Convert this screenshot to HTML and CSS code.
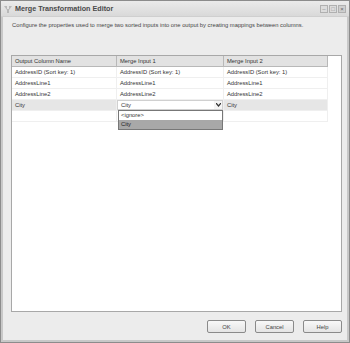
FILE: index.html
```html
<!DOCTYPE html>
<html lang="en">
<head>
    <meta charset="UTF-8">
    <title>Merge Transformation Editor</title>
    <link rel="stylesheet" href="styles.css">
</head>
<body>
    <div class="window">
        <!-- Title bar -->
        <div class="title-bar">
            <svg class="title-icon" width="8" height="8" viewBox="0 0 8 8">
                <path d="M0 1 L3 1 L3 4 L5 4 L5 1 L8 1 L5 5 L5 8 L3 8 L3 5 Z" fill="#b8b8b8"/>
            </svg>
            <span class="title-text">Merge Transformation Editor</span>
            <div class="title-buttons">
                <span class="tb-btn">&ndash;</span>
                <span class="tb-btn">&#9633;</span>
                <span class="tb-btn close">&times;</span>
            </div>
        </div>

        <div class="content">
            <p class="description">Configure the properties used to merge two sorted inputs into one output by creating mappings between columns.</p>

            <div class="grid-box">
                <div class="grid">
                    <div class="row header">
                        <div class="cell">Output Column Name</div>
                        <div class="cell">Merge Input 1</div>
                        <div class="cell">Merge Input 2</div>
                    </div>
                    <div class="row">
                        <div class="cell">AddressID (Sort key: 1)</div>
                        <div class="cell">AddressID (Sort key: 1)</div>
                        <div class="cell">AddressID (Sort key: 1)</div>
                    </div>
                    <div class="row">
                        <div class="cell">AddressLine1</div>
                        <div class="cell">AddressLine1</div>
                        <div class="cell">AddressLine1</div>
                    </div>
                    <div class="row">
                        <div class="cell">AddressLine2</div>
                        <div class="cell">AddressLine2</div>
                        <div class="cell">AddressLine2</div>
                    </div>
                    <div class="row selected">
                        <div class="cell">City</div>
                        <div class="cell combo-cell">
                            <div class="combo">
                                <span>City</span>
                                <span class="combo-arrow">
                                    <svg width="5" height="4" viewBox="0 0 5 4"><path d="M0 0 L2.5 3 L5 0" fill="none" stroke="#333" stroke-width="1.2"/></svg>
                                </span>
                            </div>
                            <div class="dropdown">
                                <div class="option">&lt;ignore&gt;</div>
                                <div class="option active">City</div>
                            </div>
                        </div>
                        <div class="cell">City</div>
                    </div>
                    <div class="row empty">
                        <div class="cell"></div>
                        <div class="cell"></div>
                        <div class="cell"></div>
                    </div>
                </div>
            </div>

            <div class="footer">
                <button class="btn">OK</button>
                <button class="btn">Cancel</button>
                <button class="btn">Help</button>
            </div>
        </div>
    </div>
</body>
</html>
```

FILE: styles.css
```css
/* Base */
html, body {
    margin: 0;
    padding: 0;
    background: #ffffff;
}

body {
    font-family: "Liberation Sans", Arial, sans-serif;
    font-size: 5.8px;
    color: #333;
}

/* --- Window frame --- */
.window {
    width: 350px;
    height: 343px;
    box-sizing: border-box;
    border: 1px solid #8c8c8c;
    background: #ececec;
    display: flex;
    flex-direction: column;
}

.title-bar {
    height: 15px;
    display: flex;
    align-items: center;
    padding: 0 3px 0 3px;
    background: linear-gradient(#ebebeb, #d9d9d9);
    border-bottom: 1px solid #cfcfcf;
}

.title-icon {
    margin-right: 3px;
}

.title-text {
    font-weight: bold;
    font-size: 7.2px;
    color: #4a4a4a;
    flex: 1;
}

.title-buttons {
    display: flex;
    gap: 1px;
}

.tb-btn {
    width: 8px;
    height: 8px;
    box-sizing: border-box;
    border: 1px solid #b0b0b0;
    background: #dcdcdc;
    color: #888;
    font-size: 6px;
    line-height: 6px;
    text-align: center;
}

.tb-btn.close {
    background: #cfcfcf;
    color: #666;
}

/* --- Content --- */
.content {
    flex: 1;
    display: flex;
    flex-direction: column;
    padding: 0 5px 0 8px;
    border-left: 2px solid #c8c8c8;
    border-right: 2px solid #c8c8c8;
    border-bottom: 2px solid #c8c8c8;
}

.description {
    margin: 5px 0 0;
    height: 33px;
    line-height: 7px;
    padding-left: 1px;
    color: #444;
}

/* --- Grid --- */
.grid-box {
    height: 257px;
    box-sizing: border-box;
    border: 1px solid #a8a8a8;
    background: #fff;
    display: flex;
    padding-right: 13px;
}

.grid {
    flex: 1;
    display: flex;
    flex-direction: column;
}

.row {
    display: grid;
    grid-template-columns: 105px 107px 1fr;
    height: 10px;
    border-bottom: 1px solid #efefef;
}

.row.header {
    height: 10px;
    background: #e2e2e2;
    border-bottom: 1px solid #b8b8b8;
}

.row.selected {
    background: #e6e6e6;
}

.cell {
    padding: 0 3px;
    line-height: 10px;
    white-space: nowrap;
    border-right: 1px solid #efefef;
}

.row.header .cell {
    border-right: 1px solid #b8b8b8;
}

/* Combo in selected row */
.combo-cell {
    position: relative;
    padding: 0;
}

.combo {
    height: 10px;
    box-sizing: border-box;
    border: 1px solid #d0d0d0;
    background: #fff;
    display: flex;
    align-items: center;
    justify-content: space-between;
    padding-left: 3px;
}

.combo-arrow {
    width: 8px;
    height: 8px;
    display: flex;
    align-items: center;
    justify-content: center;
    background: #f4f4f4;
}

.dropdown {
    position: absolute;
    top: 10px;
    left: 1px;
    right: 0;
    border: 1px solid #777;
    background: #fff;
    z-index: 5;
}

.option {
    height: 9px;
    line-height: 9px;
    padding: 0 2px;
}

.option.active {
    background: #a8a8a8;
    color: #222;
}

/* --- Footer buttons --- */
.footer {
    flex: 1;
    display: flex;
    justify-content: flex-end;
    align-items: center;
    gap: 9px;
    padding-top: 1px;
}

.btn {
    width: 39px;
    height: 13px;
    padding: 0;
    font-family: "Liberation Sans", Arial, sans-serif;
    font-size: 5.8px;
    color: #444;
    background: linear-gradient(#f8f8f8, #e4e4e4);
    border: 1px solid #8a8a8a;
    border-radius: 2px;
}
```
